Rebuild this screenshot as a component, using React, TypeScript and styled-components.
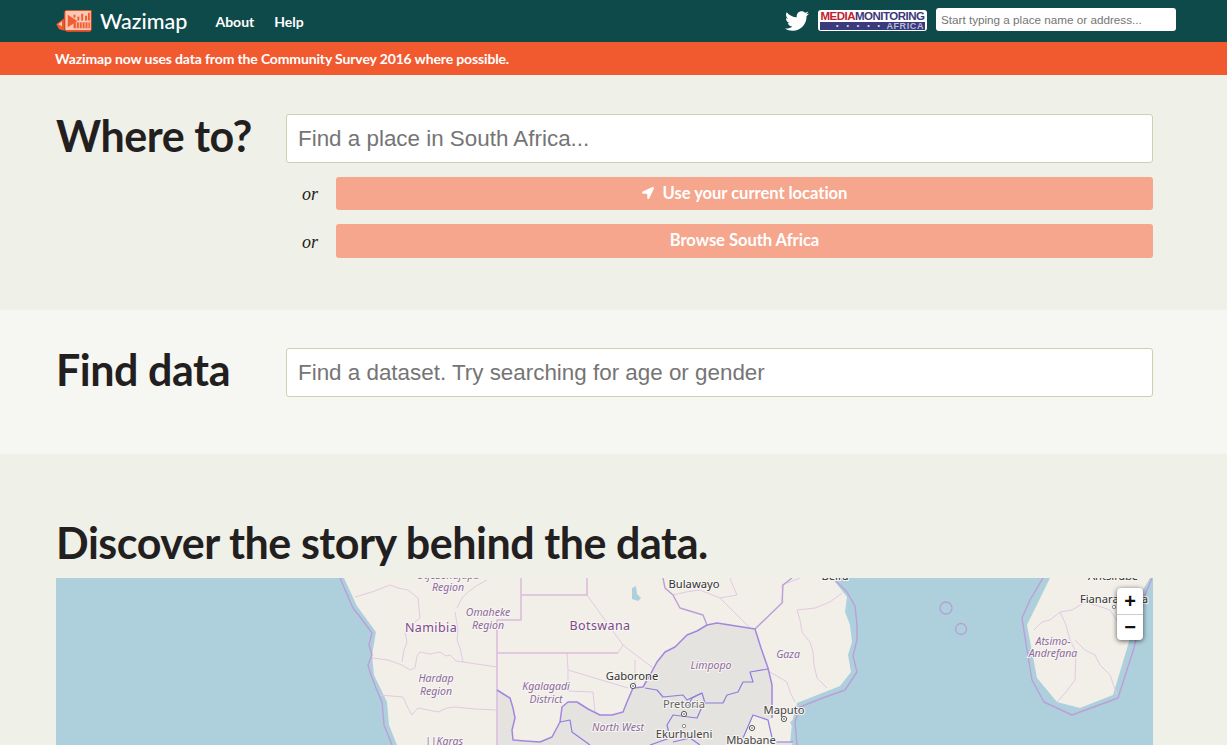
import styled, { createGlobalStyle } from "styled-components";
import { FaLocationArrow, FaTwitter } from "react-icons/fa";

const Colors = {
  nav: "#0f4a4b",
  orange: "#f15a2f",
  salmon: "#f5a68c",
  page: "#eff0e8",
  pale: "#f6f7f2",
  ink: "#231f20",
  inputBorder: "#cdd1ad",
};

const GlobalStyle = createGlobalStyle`
  html, body {
    margin: 0;
    padding: 0;
    background: ${Colors.page};
    font-family: Lato, "Liberation Sans", sans-serif;
    color: ${Colors.ink};
  }
  * { box-sizing: border-box; }
`;

const regionLabels: [string, number, number][] = [
  ["Otjozondjupa", 448, 579],
  ["Region", 448, 591],
  ["Omaheke", 488, 616],
  ["Region", 488, 629],
  ["Hardap", 436, 682],
  ["Region", 436, 695],
  ["Kgalagadi", 546, 690],
  ["District", 546, 703],
  ["||Karas", 444, 745],
  ["North West", 618, 731],
  ["Limpopo", 711, 669],
  ["Gaza", 788, 658],
  ["Atsimo-", 1053, 645],
  ["Andrefana", 1053, 657],
];

const cityLabels: [string, number, number, string][] = [
  ["Bulawayo", 694, 588, "#333"],
  ["Gaborone", 632, 680, "#333"],
  ["Pretoria", 684, 708, "#666"],
  ["Ekurhuleni", 684, 738, "#444"],
  ["Mbabane", 751, 744, "#444"],
  ["Maputo", 784, 714, "#444"],
  ["Fianarantsoa", 1114, 603, "#333"],
  ["Antsirabe", 1113, 580, "#333"],
  ["Beira", 835, 580, "#333"],
];

const cityDots: [number, number][] = [
  [633, 686],
  [684, 714],
  [752, 728],
  [784, 719],
];

const thinBorders = [
  "M355 597L372 592L390 585L398 588L408 590L418 598L419 608L420 618L412 624L405 632L407 642L404 650L402 662",
  "M372 658L388 660L402 665L410 670L415 668L417 656L420 652L430 654L440 652L446 656L450 655L456 661L463 662L497 667",
  "M455 612L458 630L457 640L460 648L463 662",
  "M457 608L462 598L468 592L476 586L487 580",
  "M380 695L403 697L408 708L412 715L418 708L428 710L438 712L447 708L455 707L475 709L497 710",
  "M587 595L605 620L623 645L653 668",
  "M567 653L568 670L628 688",
  "M568 670L568 691L593 692L595 712",
  "M635 660L635 687",
  "M623 645L618 653",
  "M673 595L686 592L700 590L720 598L736 614L750 628",
  "M730 578L733 586L737 595L720 598",
  "M797 610L815 608L830 602L842 593",
  "M797 610L800 620L802 632L810 642L813 652L814 665L817 678L827 688",
  "M770 672L787 682L790 692L795 702",
  "M800 578L782 585L783 603",
  "M1034 630L1042 622L1050 620L1060 612L1072 610L1085 602L1098 606L1110 610L1118 622L1125 625",
  "M1060 612L1066 625L1070 640L1076 652L1075 680L1066 692L1057 702",
  "M1075 640L1085 650L1095 655L1100 665L1110 675L1117 695",
];

const thickBorders = [
  "M521 578L521 620L497 620L497 745",
  "M521 595L587 595L587 578",
  "M497 653L618 653",
];

const violetBorders = [
  "M663 578L665 588L673 595L680 608L703 615L707 625",
  "M755 629L782 603L783 585L792 578",
  "M340 578L346 592L353 608L364 622L372 633L369 645L372 655L368 665L371 675L376 688L382 702L384 725L392 745",
  "M833 578L847 592L855 606L857 625L857 640L853 656L857 672L845 690L820 699L800 707L795 722L797 745",
  "M1043 578L1030 600L1022 618L1027 650L1032 680L1044 702L1072 715L1118 698L1134 648L1145 595L1152 578",
];

const provinceBorders = [
  "M645 688L657 690L663 697L683 695L687 700L702 693L705 703L723 703L727 695L738 692L743 682L753 682L750 672L768 669",
  "M702 707L697 718L673 715L667 725L670 738L650 745",
  "M560 722L570 720L572 732L590 745",
  "M673 742L690 738L700 745",
  "M702 693L692 698L688 706L702 707L705 703",
  "M743 738L753 715L768 720L773 742L793 742",
];

const saBorder =
  "M497 690L505 695L510 698L513 708L515 718L512 730L513 740L525 741L540 742L552 737L560 722L562 707L568 702L577 702L588 709L600 715L612 715L623 712L627 702L633 688L643 687L650 675L657 662L665 652L675 647L687 635L697 631L707 625L717 623L736 626L755 629L761 648L768 668L772 685L772 718";

function MapArt() {
  return (
    <MapSvg viewBox="56 578 1097 167" aria-label="Map of southern Africa">
      <rect x="56" y="578" width="1097" height="167" fill="#aed0dd" />
      <path
        d="M344 578L357 606L376 632L372 655L374 675L387 702L389 725L397 745L790 745L792 722L797 703L840 686L851 672L848 655L852 642L850 625L845 612L847 597L832 578Z"
        fill="#f2efe9"
      />
      <path
        d="M1050 578L1027 625L1037 678L1057 702L1080 708L1113 695L1128 645L1140 595L1150 578Z"
        fill="#f2efe9"
      />
      <path d="M632 588L636 586L637 594L641 598L638 601L632 599Z" fill="#aed0dd" />
      <path d="M790 722L797 718L793 728Z" fill="#aed0dd" />
      <path d={`${saBorder}L768 720L753 715L743 738L741 745L497 745Z`} fill="#e5e3df" />
      <path d="M773 742L793 742L792 745L773 745Z" fill="#e5e3df" />

      {thinBorders.map((d) => (
        <BorderLine key={d} d={d} stroke="#e3c9e4" strokeWidth="1" />
      ))}
      {thickBorders.map((d) => (
        <BorderLine key={d} d={d} stroke="#dcbcde" strokeWidth="1.6" />
      ))}
      {violetBorders.map((d) => (
        <BorderLine key={d} d={d} stroke="#bb9fd6" strokeWidth="1.4" />
      ))}
      <BorderLine d={saBorder} stroke="#a387de" strokeWidth="1.5" />
      {provinceBorders.map((d) => (
        <BorderLine key={d} d={d} stroke="#8f7be0" strokeWidth="1.2" />
      ))}

      <circle cx="946" cy="608" r="6" fill="none" stroke="#b79fd4" strokeWidth="1.3" />
      <circle cx="961" cy="629" r="5.5" fill="none" stroke="#b79fd4" strokeWidth="1.3" />

      {regionLabels.map(([text, x, y]) => (
        <RegionText key={`${text}-${x}-${y}`} x={x} y={y}>
          {text}
        </RegionText>
      ))}
      <CountryText x="431" y="632">Namibia</CountryText>
      <CountryText x="600" y="630">Botswana</CountryText>
      {cityLabels.map(([text, x, y, color]) => (
        <CityText key={text} x={x} y={y} fill={color}>
          {text}
        </CityText>
      ))}
      {cityDots.map(([x, y]) => (
        <g key={x}>
          <circle cx={x} cy={y} r="2.6" fill="#fff" stroke="#555" strokeWidth="1" />
          <circle cx={x} cy={y} r="0.8" fill="#444" />
        </g>
      ))}
      <circle cx="684" cy="726" r="1.7" fill="#fff" stroke="#777" strokeWidth="0.8" />
      <circle cx="1114" cy="607" r="1.7" fill="#fff" stroke="#777" strokeWidth="0.8" />
    </MapSvg>
  );
}

function WazimapLogo() {
  return (
    <LogoSvg viewBox="0 0 38 25" aria-hidden="true">
      <path d="M0 16L8 10L8 21L10 23L3 21Z" fill="#f25b2f" />
      <path d="M2 16L6 13V18Z" fill="#f8cdbc" />
      <path d="M8 3.5L10 1H37V22L35 24H11L8 21Z" fill="#d9481f" />
      <rect x="9.5" y="2" width="26.5" height="20" fill="#f7c9b6" />
      <path d="M12 6L22 12.5L12 19Z" fill="#f25b2f" />
      <rect x="18" y="6" width="2" height="3" fill="#f25b2f" />
      <rect x="22" y="8" width="2" height="4" fill="#f25b2f" />
      <rect x="26" y="5" width="2" height="7" fill="#f25b2f" />
      <rect x="30" y="7" width="2" height="5" fill="#f25b2f" />
      <rect x="33" y="4" width="2" height="8" fill="#f25b2f" />
      <rect x="18" y="14" width="17" height="6" fill="#f25b2f" />
      <path d="M21 14V20M24 14V20M27 14V20M30 14V20M33 14V20" stroke="#f7c9b6" strokeWidth="1" />
    </LogoSvg>
  );
}

export default function App() {
  return (
    <>
      <GlobalStyle />
      <Header>
        <Brand>
          <WazimapLogo />
          <BrandName>Wazimap</BrandName>
        </Brand>
        <NavLinks>
          <NavLink>About</NavLink>
          <NavLink>Help</NavLink>
        </NavLinks>
        <HeaderRight>
          <TwitterIcon />
          <PartnerBadge>
            <PartnerTop>
              <span>MEDIA</span>
              <b>MONITORING</b>
            </PartnerTop>
            <PartnerBand>
              <Dots>• • • • •</Dots>
              <PartnerAfrica>AFRICA</PartnerAfrica>
            </PartnerBand>
          </PartnerBadge>
          <HeaderSearch placeholder="Start typing a place name or address..." />
        </HeaderRight>
      </Header>
      <Banner>Wazimap now uses data from the Community Survey 2016 where possible.</Banner>

      <WhereSection>
        <Heading>Where to?</Heading>
        <Stack>
          <BigInput placeholder="Find a place in South Africa..." />
          <OrRow>
            <OrLabel>or</OrLabel>
            <ActionButton>
              <ArrowIcon />
              Use your current location
            </ActionButton>
          </OrRow>
          <OrRow>
            <OrLabel>or</OrLabel>
            <ActionButton $tall>Browse South Africa</ActionButton>
          </OrRow>
        </Stack>
      </WhereSection>

      <FindSection>
        <Heading>Find data</Heading>
        <BigInput placeholder="Find a dataset. Try searching for age or gender" />
      </FindSection>

      <DiscoverSection>
        <DiscoverHeading>Discover the story behind the data.</DiscoverHeading>
        <MapFrame>
          <MapArt />
          <ZoomControl>
            <ZoomButton>+</ZoomButton>
            <ZoomButton>−</ZoomButton>
          </ZoomControl>
        </MapFrame>
      </DiscoverSection>
    </>
  );
}

const Header = styled.header`
  height: 42px;
  background: ${Colors.nav};
  display: flex;
  align-items: center;
  padding: 0 51px 0 56px;
`;

const Brand = styled.div`
  display: flex;
  align-items: center;
  gap: 7px;
`;

const LogoSvg = styled.svg`
  width: 37px;
  height: 24px;
  display: block;
`;

const BrandName = styled.span`
  color: #fff;
  font-size: 21.5px;
  font-weight: 500;
  line-height: 42px;
`;

const NavLinks = styled.nav`
  display: flex;
  gap: 20px;
  margin-left: 28px;
`;

const NavLink = styled.a`
  color: #fff;
  font-size: 14px;
  font-weight: 700;
`;

const HeaderRight = styled.div`
  margin-left: auto;
  display: flex;
  align-items: center;
`;

const TwitterIcon = styled(FaTwitter)`
  width: 24px;
  height: 24px;
  color: #fff;
  margin-right: 9px;
`;

const PartnerBadge = styled.div`
  width: 109px;
  height: 21px;
  background: #fff;
  border-radius: 3px;
  padding: 1px 2px;
  display: flex;
  flex-direction: column;
  margin: 0 9px 1px 0;
  overflow: hidden;
`;

const PartnerTop = styled.div`
  display: flex;
  justify-content: center;
  font-family: "Liberation Sans", sans-serif;
  font-size: 11.5px;
  line-height: 11px;
  font-weight: 700;
  letter-spacing: -0.5px;
  color: #c2202f;
  white-space: nowrap;

  b {
    color: #3c3a78;
  }
`;

const PartnerBand = styled.div`
  height: 8px;
  background: #3a3a7c;
  display: flex;
  align-items: center;
  justify-content: space-between;
  padding: 0 1px 0 16px;
  overflow: hidden;
`;

const Dots = styled.span`
  color: #dfe0ee;
  font-family: "Liberation Sans", sans-serif;
  font-size: 7px;
  line-height: 8px;
  letter-spacing: 3px;
  white-space: nowrap;
`;

const PartnerAfrica = styled.span`
  color: #b9bad6;
  font-family: "Liberation Sans", sans-serif;
  font-size: 9px;
  line-height: 8px;
  font-weight: 700;
  letter-spacing: 0.6px;
`;

const HeaderSearch = styled.input`
  width: 240px;
  height: 23px;
  border: 0;
  border-radius: 3px;
  background: #fff;
  padding: 0 5px;
  margin-bottom: 4px;
  font-family: "Liberation Sans", sans-serif;
  font-size: 11.7px;
  outline: none;

  &::placeholder {
    color: #757575;
    opacity: 1;
  }
`;

const Banner = styled.div`
  height: 33px;
  background: ${Colors.orange};
  color: #fff;
  font-size: 14px;
  letter-spacing: -0.14px;
  font-weight: 700;
  line-height: 34px;
  padding-left: 55px;
`;

const Section = styled.section`
  display: grid;
  grid-template-columns: 230px 867px;
  padding-left: 56px;
  align-items: start;
`;

const WhereSection = styled(Section)`
  height: 235px;
  padding-top: 39px;
  background: ${Colors.page};
`;

const FindSection = styled(Section)`
  height: 144px;
  padding-top: 38px;
  background: ${Colors.pale};
`;

const Heading = styled.h1`
  margin: 0;
  font-size: 43px;
  letter-spacing: -0.45px;
  line-height: 43px;
  font-weight: 700;
  color: ${Colors.ink};
`;

const Stack = styled.div`
  display: flex;
  flex-direction: column;
  gap: 14px;
`;

const BigInput = styled.input`
  width: 100%;
  height: 49px;
  border: 1px solid ${Colors.inputBorder};
  border-radius: 3px;
  background: #fff;
  padding: 0 11px;
  font-family: "Liberation Sans", sans-serif;
  font-size: 22.4px;
  outline: none;

  &::placeholder {
    color: #757575;
    opacity: 1;
  }
`;

const OrRow = styled.div`
  display: flex;
  align-items: center;
`;

const OrLabel = styled.span`
  width: 50px;
  padding: 2px 0 0 16px;
  font-family: "Liberation Serif", serif;
  font-style: italic;
  font-size: 18px;
  color: ${Colors.ink};
`;

const ActionButton = styled.button<{ $tall?: boolean }>`
  flex: 1;
  height: ${(p) => (p.$tall ? "34px" : "33px")};
  border: 0;
  border-radius: 3px;
  background: ${Colors.salmon};
  color: #fff;
  font-family: Lato, sans-serif;
  font-size: 16.6px;
  letter-spacing: -0.05px;
  font-weight: 700;
  display: flex;
  align-items: center;
  justify-content: center;
  gap: 9px;
  padding: 0 0 ${(p) => (p.$tall ? "2px" : "1px")};
`;

const ArrowIcon = styled(FaLocationArrow)`
  width: 12px;
  height: 12px;
`;

const DiscoverSection = styled.section`
  padding: 65px 74px 0 56px;
  background: ${Colors.page};
`;

const DiscoverHeading = styled.h2`
  margin: 0 0 11px;
  font-size: 43px;
  letter-spacing: -0.45px;
  line-height: 48px;
  font-weight: 700;
  color: ${Colors.ink};
`;

const MapFrame = styled.div`
  position: relative;
  height: 167px;
  overflow: hidden;
`;

const MapSvg = styled.svg`
  display: block;
  width: 1097px;
  height: 167px;
`;

const BorderLine = styled.path`
  fill: none;
  stroke-linejoin: round;
`;

const RegionText = styled.text`
  font-family: "Noto Sans", sans-serif;
  font-style: italic;
  font-size: 10.5px;
  fill: #8d6a9a;
  text-anchor: middle;
  paint-order: stroke;
  stroke: #f7f5f2;
  stroke-width: 2px;
`;

const CountryText = styled.text`
  font-family: "Noto Sans", sans-serif;
  font-size: 12.5px;
  letter-spacing: 0.4px;
  fill: #7d4a8c;
  text-anchor: middle;
  paint-order: stroke;
  stroke: #f7f5f2;
  stroke-width: 2px;
`;

const CityText = styled.text`
  font-family: "Noto Sans", sans-serif;
  font-size: 11.2px;
  text-anchor: middle;
  paint-order: stroke;
  stroke: #f7f5f2;
  stroke-width: 2px;
`;

const ZoomControl = styled.div`
  position: absolute;
  top: 10px;
  right: 10px;
  width: 26px;
  border-radius: 4px;
  background: #fff;
  box-shadow: 0 1px 5px rgba(0, 0, 0, 0.65);
  overflow: hidden;
`;

const ZoomButton = styled.div`
  height: 26px;
  display: flex;
  align-items: center;
  justify-content: center;
  font-family: "Liberation Sans", sans-serif;
  font-size: 20px;
  font-weight: 700;
  color: #111;

  & + & {
    border-top: 1px solid #ccc;
  }
`;
